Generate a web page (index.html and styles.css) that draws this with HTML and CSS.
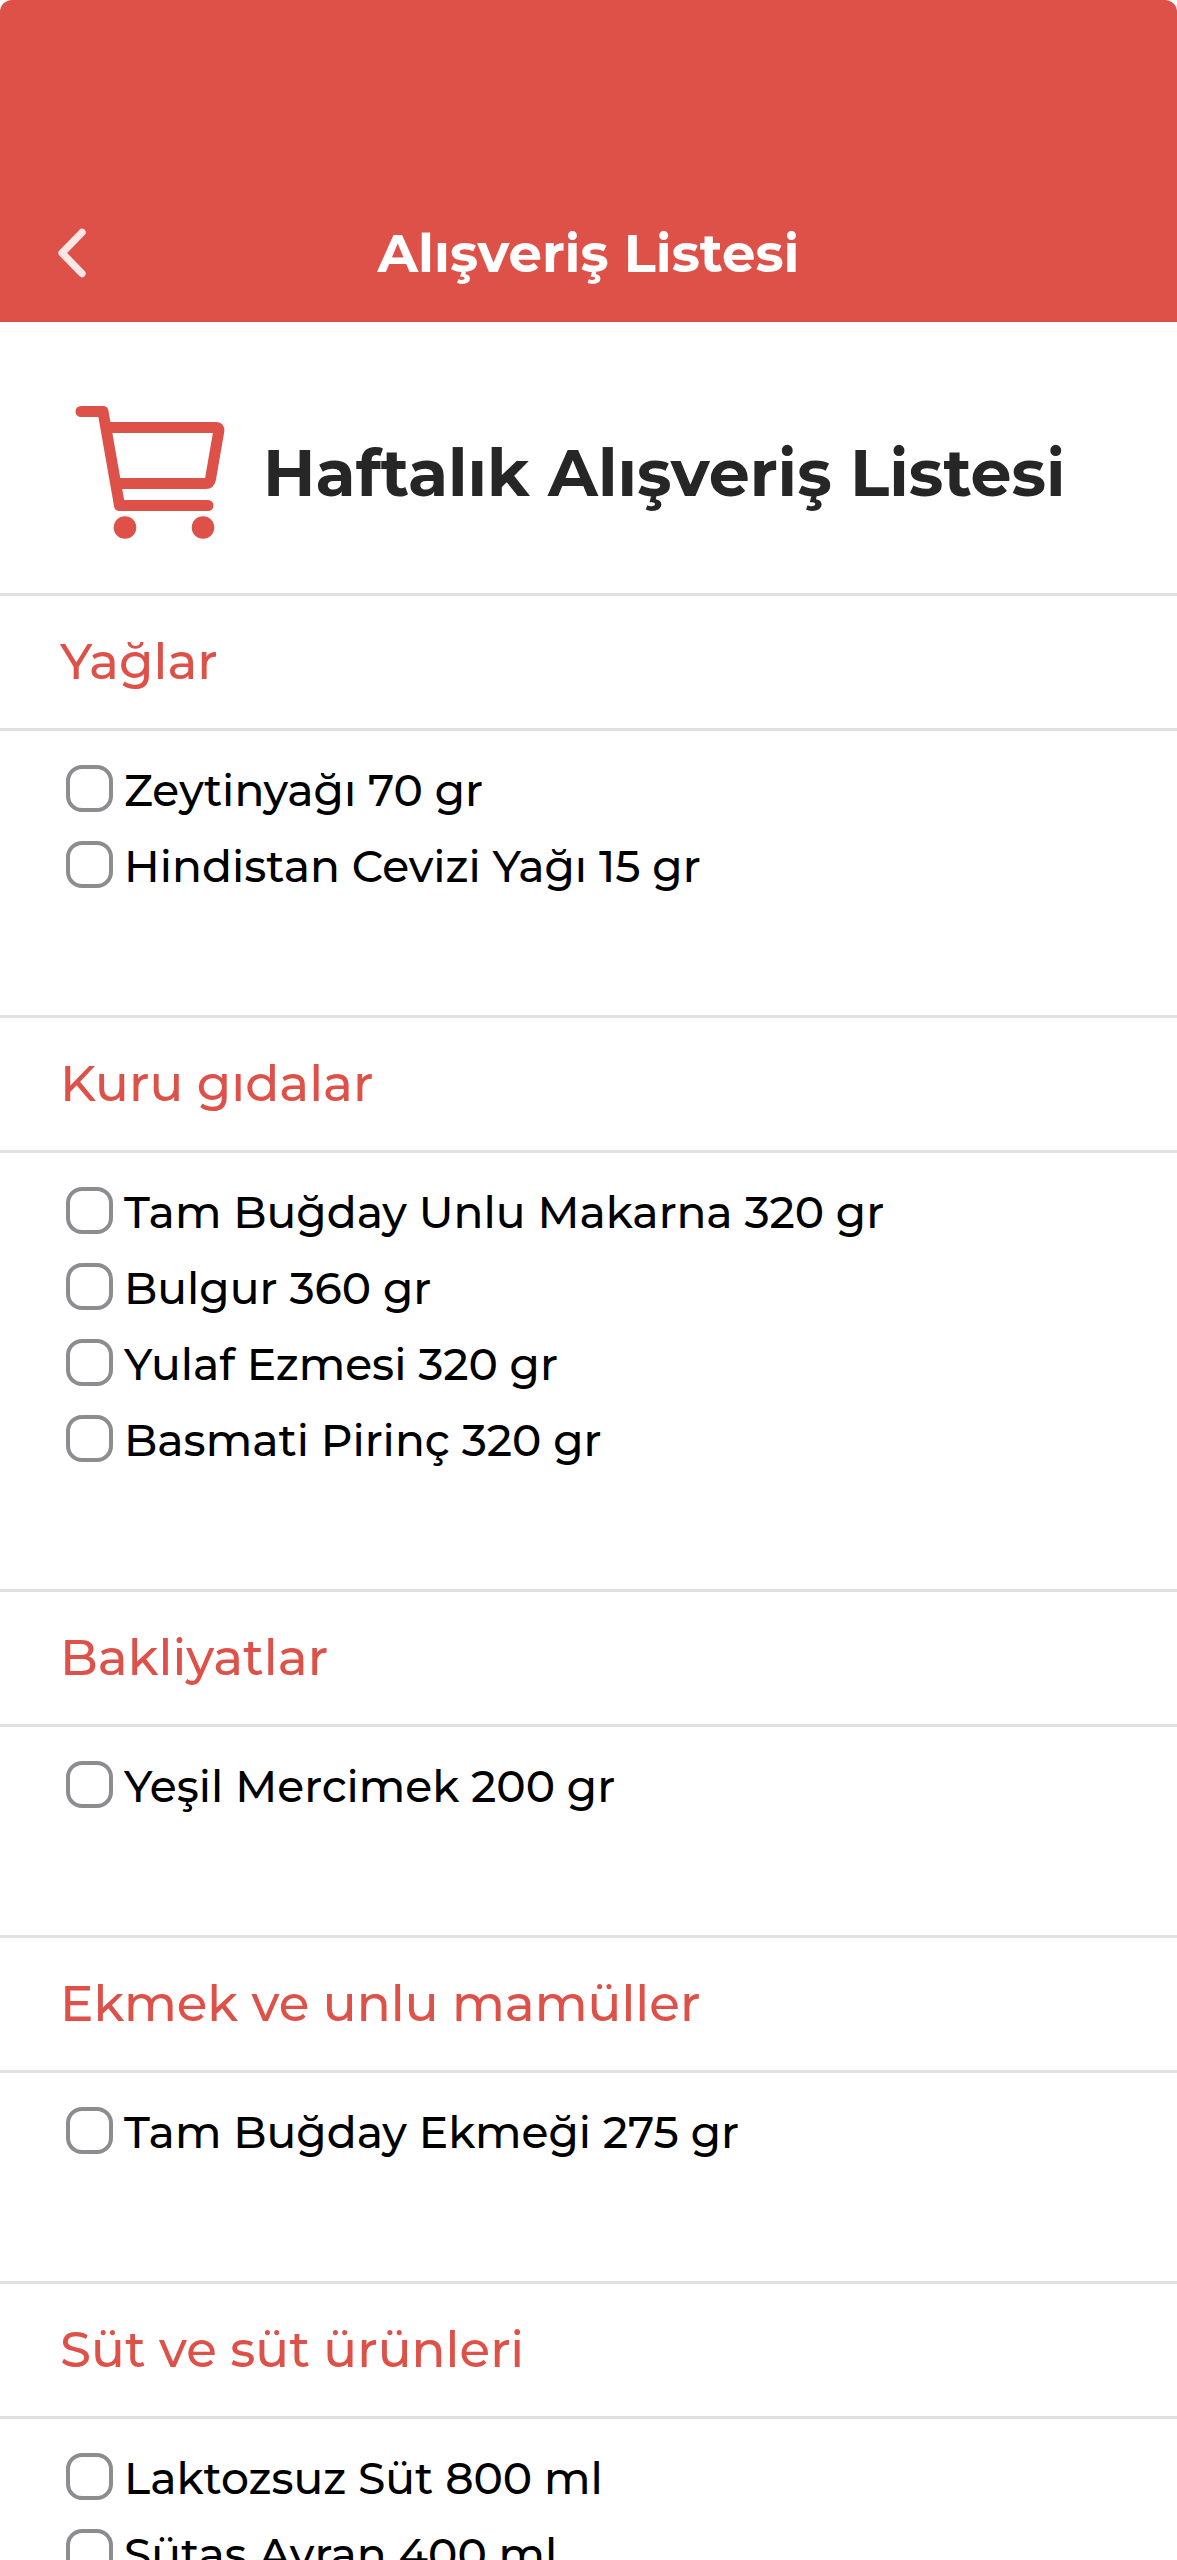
FILE: index.html
```
<!DOCTYPE html>
<html lang="tr">
<head>
    <meta charset="UTF-8">
    <meta name="viewport" content="width=device-width, initial-scale=1.0">
    <title>Alışveriş Listesi</title>
    <link rel="stylesheet" href="styles.css">
</head>
<body>
    <header class="header">
        <a href="#" class="back-link" aria-label="Geri">
            <svg class="back-icon" viewBox="0 0 28 50" fill="none">
                <path d="M24 4.500L4 25l20 20.500" stroke="currentColor" stroke-width="7.400" stroke-linecap="round" stroke-linejoin="round"/>
            </svg>
        </a>
        <h1 class="header-title">Alışveriş Listesi</h1>
    </header>

    <main>
        <div class="list-title">
            <svg class="cart-icon" viewBox="0 0 150 133" fill="none">
                <path d="M6 5.500H28L44.500 99.500H133" stroke="currentColor" stroke-width="11" stroke-linecap="round" stroke-linejoin="round"/>
                <path d="M30 21.500H141Q144.500 21.500 143.800 25L135.500 73Q134.500 77.500 131 77.500H42" stroke="currentColor" stroke-width="11" stroke-linejoin="round"/>
                <circle cx="50" cy="121.500" r="11.300" fill="currentColor"/>
                <circle cx="128" cy="121.500" r="11.300" fill="currentColor"/>
            </svg>
            <h2 class="list-title-text">Haftalık Alışveriş Listesi</h2>
        </div>

        <section class="category">
            <h3 class="category-title">Yağlar</h3>
            <ul class="items">
                <li><label class="item"><input type="checkbox" class="item-check">Zeytinyağı 70 gr</label></li>
                <li><label class="item"><input type="checkbox" class="item-check">Hindistan Cevizi Yağı 15 gr</label></li>
            </ul>
        </section>

        <section class="category">
            <h3 class="category-title">Kuru gıdalar</h3>
            <ul class="items">
                <li><label class="item"><input type="checkbox" class="item-check">Tam Buğday Unlu Makarna 320 gr</label></li>
                <li><label class="item"><input type="checkbox" class="item-check">Bulgur 360 gr</label></li>
                <li><label class="item"><input type="checkbox" class="item-check">Yulaf Ezmesi 320 gr</label></li>
                <li><label class="item"><input type="checkbox" class="item-check">Basmati Pirinç 320 gr</label></li>
            </ul>
        </section>

        <section class="category">
            <h3 class="category-title">Bakliyatlar</h3>
            <ul class="items">
                <li><label class="item"><input type="checkbox" class="item-check">Yeşil Mercimek 200 gr</label></li>
            </ul>
        </section>

        <section class="category">
            <h3 class="category-title">Ekmek ve unlu mamüller</h3>
            <ul class="items">
                <li><label class="item"><input type="checkbox" class="item-check">Tam Buğday Ekmeği 275 gr</label></li>
            </ul>
        </section>

        <section class="category">
            <h3 class="category-title">Süt ve süt ürünleri</h3>
            <ul class="items">
                <li><label class="item"><input type="checkbox" class="item-check">Laktozsuz Süt 800 ml</label></li>
                <li><label class="item"><input type="checkbox" class="item-check">Sütaş Ayran 400 ml</label></li>
            </ul>
        </section>
    </main>
</body>
</html>
```
FILE: styles.css
```
:root {
    --primary-color: #de5149;
    --text-dark: #262626;
    --border-color: #e1e1e1;
    --check-color: #8c8c91;
    --white: #fff;
}

* {
    margin: 0;
    padding: 0;
    box-sizing: border-box;
}

body {
    font-family: 'Montserrat', 'Inter', sans-serif;
    font-weight: 500;
    color: #000;
    background-color: var(--white);
}

/* Header */
.header {
    display: grid;
    grid-template-columns: 88px 1fr 88px;
    align-items: center;
    padding-top: 184px;
    background-color: var(--primary-color);
    border-radius: 12px 12px 0 0;
}

.back-link {
    display: flex;
    justify-content: flex-end;
    color: #fae6e5;
}

.back-icon {
    width: 28px;
    height: 50px;
    margin-right: 2px;
}

.header-title {
    color: var(--white);
    font-size: 53px;
    font-weight: 700;
    line-height: 138px;
    text-align: center;
}

/* Cart and list name */
.list-title {
    display: flex;
    align-items: center;
    gap: 38px;
    padding: 84px 75px 54px;
}

.cart-icon {
    flex: none;
    width: 150px;
    height: 133px;
    color: var(--primary-color);
}

.list-title-text {
    color: var(--text-dark);
    font-size: 65px;
    font-weight: 700;
    line-height: 80px;
    white-space: nowrap;
}

/* Categories */
.category-title {
    padding: 0 60px;
    border-top: 3px solid var(--border-color);
    border-bottom: 3px solid var(--border-color);
    color: var(--primary-color);
    font-size: 50px;
    font-weight: 500;
    line-height: 132px;
}

.items {
    list-style: none;
    padding: 21px 66px 111px;
}

.item {
    display: flex;
    align-items: center;
    gap: 11px;
    font-size: 44px;
    line-height: 76px;
    cursor: pointer;
}

.item-check {
    appearance: none;
    flex: none;
    width: 47px;
    height: 47px;
    margin-bottom: 4px;
    border: 4px solid var(--check-color);
    border-radius: 16px;
    background-color: var(--white);
}

.item-check:checked {
    border-color: var(--primary-color);
    background-color: var(--primary-color);
}
```
